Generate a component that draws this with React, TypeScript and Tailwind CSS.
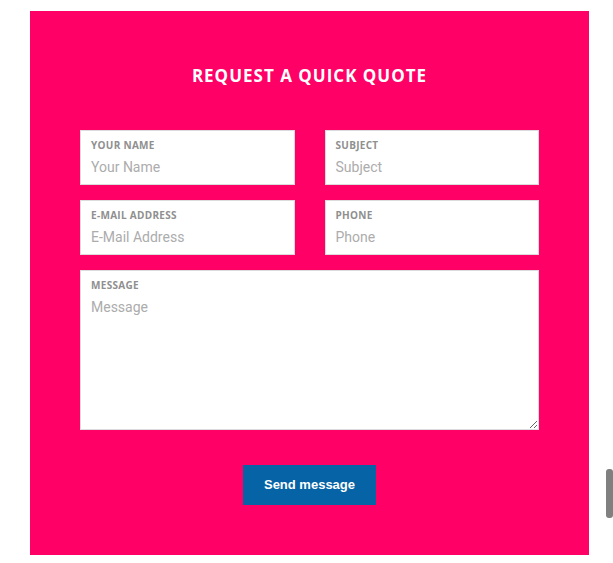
import type { ReactNode } from "react";

function Field({ label, children }: { label: string; children: ReactNode }) {
  return (
    <div className="flex flex-col border border-[#dcdcdc] bg-white px-[10px] pt-[8px] pb-[7px]">
      <label className="h-[12px] text-[10px] leading-[12px] font-bold uppercase tracking-[0.3px] text-[#8f8f8f] font-['Open_Sans',sans-serif]">
        {label}
      </label>
      {children}
    </div>
  );
}

const inputCls =
  "mt-[6px] h-[20px] w-full bg-transparent text-[14px] leading-[20px] text-[#555] outline-none placeholder:text-[#acacac] font-['Roboto',sans-serif]";

export default function App() {
  return (
    <div className="min-h-[563px] bg-white pt-[11px] pl-[30px]">
      <form className="flex w-[559px] flex-col px-[50px] pt-[53px] pb-[50px] bg-[#ff0066]">
        <h2 className="text-center text-[17px] leading-[24px] font-bold tracking-[1px] text-white font-['Open_Sans',sans-serif]">
          REQUEST A QUICK QUOTE
        </h2>

        <div className="mt-[42px] grid grid-cols-2 gap-x-[30px] gap-y-[15px]">
          <Field label="Your Name">
            <input className={inputCls} placeholder="Your Name" />
          </Field>
          <Field label="Subject">
            <input className={inputCls} placeholder="Subject" />
          </Field>
          <Field label="E-Mail Address">
            <input className={inputCls} placeholder="E-Mail Address" />
          </Field>
          <Field label="Phone">
            <input className={inputCls} placeholder="Phone" />
          </Field>
        </div>

        <div className="mt-[15px] flex h-[160px] flex-col border border-[#dcdcdc] bg-white pl-[10px] pt-[8px]">
          <label className="h-[12px] text-[10px] leading-[12px] font-bold uppercase tracking-[0.3px] text-[#8f8f8f] font-['Open_Sans',sans-serif]">
            Message
          </label>
          <textarea
            className="mt-[6px] w-full flex-1 resize-y bg-transparent text-[14px] leading-[20px] text-[#555] outline-none placeholder:text-[#acacac] font-['Roboto',sans-serif]"
            placeholder="Message"
          />
        </div>

        <div className="mt-[35px] flex justify-center">
          <button
            type="button"
            className="h-[40px] w-[133px] bg-[#0563a6] text-[13px] font-bold text-white font-['Liberation_Sans',Arial,sans-serif]"
          >
            Send message
          </button>
        </div>
      </form>

      {/* page scrollbar thumb */}
      <div className="fixed right-0 top-[469px] h-[49px] w-[7px] rounded-[3px] bg-[#808080]" />
    </div>
  );
}
